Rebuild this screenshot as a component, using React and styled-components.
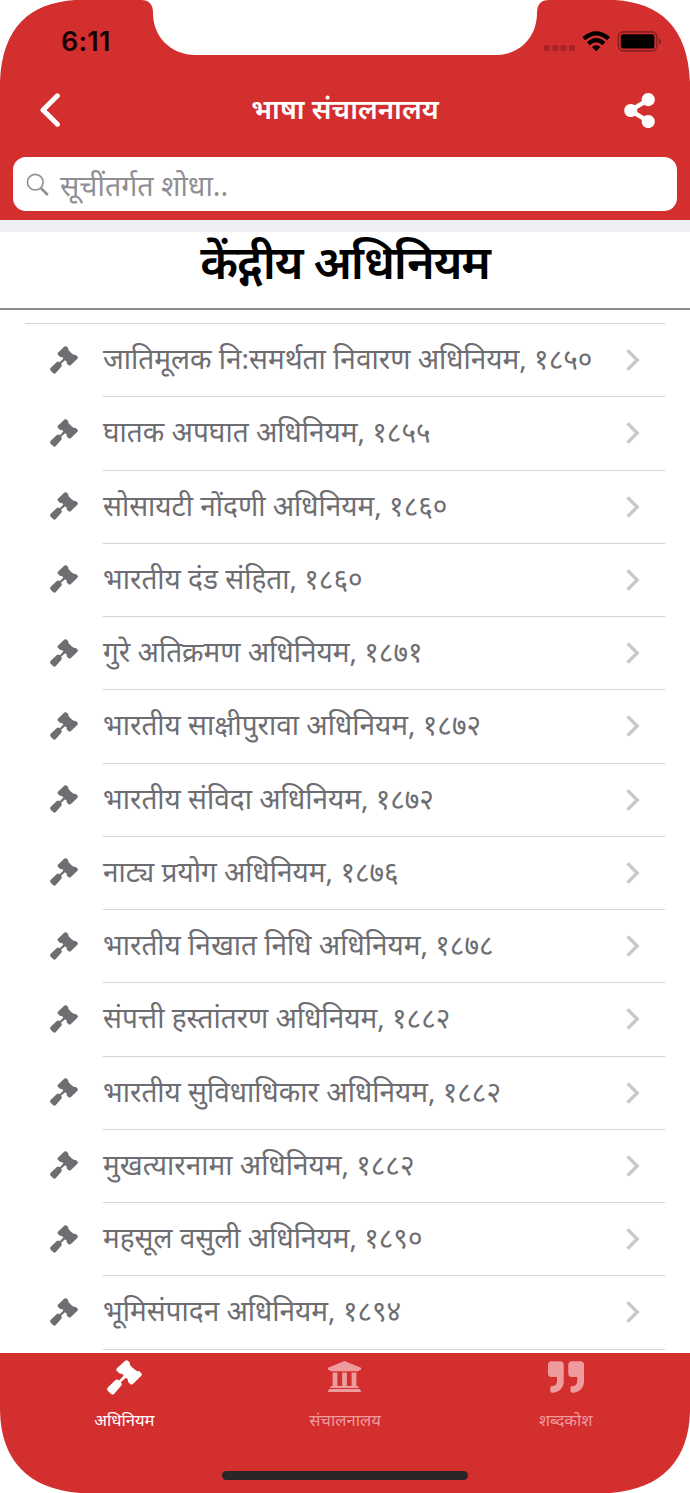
import React from "react";
import styled, { createGlobalStyle } from "styled-components";
import { FaShareAlt, FaQuoteRight } from "react-icons/fa";

const Global = createGlobalStyle`
  * { box-sizing: border-box; }
  body { margin: 0; background: #fff; }
`;

const RED = "#d32f2f";

const Screen = styled.div`
  width: 690px;
  height: 1493px;
  display: flex;
  flex-direction: column;
  overflow: hidden;
  position: relative;
  background: #fff;
  font-family: "Noto Sans", "Noto Sans Devanagari", sans-serif;
`;

const Header = styled.header`
  height: 220px;
  flex: none;
  background: ${RED};
`;

const StatusBar = styled.div`
  height: 82px;
  padding: 0 29px 0 61px;
  display: flex;
  justify-content: space-between;
  align-items: center;
`;

const Time = styled.span`
  padding-top: 2px;
  font: 600 27px/30px Inter, sans-serif;
  color: #180303;
  letter-spacing: 0.2px;
`;

const StatusIcons = styled.svg`
  width: 118px;
  height: 26px;
  display: block;
`;

const NavBar = styled.div`
  height: 56px;
  padding: 0 33px 0 39px;
  display: grid;
  grid-template-columns: 32px 1fr 35px;
  align-items: center;
  color: #fff;
`;

const NavTitle = styled.h1`
  margin: 0;
  padding: 0 3px 4px 0;
  text-align: center;
  font-size: 27.7px;
  line-height: 38px;
  font-weight: 600;
  white-space: nowrap;
`;

const SearchField = styled.div`
  height: 54px;
  margin: 19px 13px 0;
  padding: 2px 13px 0;
  border-radius: 13px;
  background: #fff;
  display: flex;
  align-items: center;
  gap: 11px;
  color: #8e8e93;
  font-size: 28.6px;
  line-height: 40px;
  white-space: nowrap;
`;

const Band = styled.div`
  height: 12px;
  flex: none;
  background: #efeff4;
`;

const Heading = styled.h2`
  height: 78px;
  flex: none;
  margin: 0;
  border-bottom: 2px solid #8c8c8c;
  text-align: center;
  font-size: 47px;
  line-height: 59px;
  letter-spacing: -1.2px;
  font-weight: 600;
  color: #000;
  white-space: nowrap;
`;

const List = styled.ul`
  flex: 1;
  min-height: 0;
  overflow: hidden;
  list-style: none;
  margin: 13px 25px 0;
  padding: 0;
  border-top: 1px solid #d4d4d6;
`;

const Row = styled.li`
  height: 73.25px;
  padding-left: 25px;
  display: flex;
  align-items: center;
  gap: 25px;
  color: #6d6d72;

  > svg {
    margin-bottom: 2px;
  }
`;

const RowBody = styled.div`
  flex: 1;
  height: 100%;
  padding-right: 25px;
  border-bottom: 1px solid #d4d4d6;
  display: flex;
  align-items: center;
  justify-content: space-between;
`;

const RowLabel = styled.span`
  padding-bottom: 4px;
  font-size: 28px;
  font-weight: 380;
  line-height: 40px;
  white-space: nowrap;
`;

const TabBar = styled.nav`
  height: 140px;
  flex: none;
  padding: 0 14px;
  background: ${RED};
  display: grid;
  grid-template-columns: repeat(3, 1fr);
`;

const Tab = styled.div`
  display: flex;
  flex-direction: column;
  align-items: center;
  padding-top: 5px;
  gap: 10px;
  color: ${(p) => (p.$active ? "#fff" : "#ee9b9d")};
  font-size: 16.6px;
  line-height: 28px;
  white-space: nowrap;
`;

const TabIcon = styled.div`
  height: 38px;
  display: flex;
  align-items: center;
`;

const Frame = styled.svg`
  position: absolute;
  inset: 0;
  pointer-events: none;
`;

const HomeIndicator = styled.div`
  position: absolute;
  left: 222px;
  bottom: 13px;
  width: 246px;
  height: 9px;
  border-radius: 5px;
  background: #2a2627;
`;

const Gavel = ({ size }) => (
  <svg width={size} height={size} viewBox="0 0 36 36" fill="currentColor">
    <path d="M18.6 .8 Q20-.4 21.4 .8 L23.2 2.6 Q24.2 3.6 23.4 4.8 Q26.6 8.9 31 11.6 Q32.4 10.8 33.6 11.9 L35.3 13.6 Q36.5 14.9 35.3 16.3 L26.6 24.6 Q25.2 25.8 23.8 24.6 L22 22.8 Q20.9 21.6 21.7 20.4 L19.4 18.2 L14.2 22.8 Q15.9 24.9 14.5 26.6 L7.5 34.6 Q5.8 36.4 3.9 34.8 L.9 31.8 Q-.7 29.9 1 28.1 L8.8 20.6 Q10.6 19.2 12.5 21 L17.2 16 L15.1 13.9 Q13.6 14.6 12.4 13.4 L10.2 11.2 Q9 9.9 10.2 8.6 Z" />
  </svg>
);

const Landmark = () => (
  <svg width="35" height="32" viewBox="0 0 35 32" fill="currentColor">
    <path d="M17.5 0L34 6.8V9.1H32.4Q32.1 10.3 31 10.3H4Q2.9 10.3 2.6 9.1H1V6.8Z" />
    <path d="M5.6 11.5H10.4V25H15.1V11.5H19.9V25H24.6V11.5H29.4V25H30.5Q31.7 25 31.8 27H3.2Q3.3 25 4.5 25H5.6Z" />
    <path d="M2.6 28H32.4Q34 28.3 34 31H1Q1 28.3 2.6 28Z" />
  </svg>
);

const acts = [
  "जातिमूलक नि:समर्थता निवारण अधिनियम, १८५०",
  "घातक अपघात अधिनियम, १८५५",
  "सोसायटी नोंदणी अधिनियम, १८६०",
  "भारतीय दंड संहिता, १८६०",
  "गुरे अतिक्रमण अधिनियम, १८७१",
  "भारतीय साक्षीपुरावा अधिनियम, १८७२",
  "भारतीय संविदा अधिनियम, १८७२",
  "नाट्य प्रयोग अधिनियम, १८७६",
  "भारतीय निखात निधि अधिनियम, १८७८",
  "संपत्ती हस्तांतरण अधिनियम, १८८२",
  "भारतीय सुविधाधिकार अधिनियम, १८८२",
  "मुखत्यारनामा अधिनियम, १८८२",
  "महसूल वसुली अधिनियम, १८९०",
  "भूमिसंपादन अधिनियम, १८९४",
];

export default function App() {
  return (
    <Screen>
      <Global />
      <Header>
        <StatusBar>
          <Time>6:11</Time>
          <StatusIcons viewBox="543 28 118 26">
            <g fill="#a82526">
              <rect x="544" y="45" width="6" height="6" rx="1.5" />
              <rect x="552.3" y="45" width="6" height="6" rx="1.5" />
              <rect x="560.6" y="45" width="6" height="6" rx="1.5" />
              <rect x="569" y="45" width="6" height="6" rx="1.5" />
            </g>
            <g fill="none" stroke="#000" strokeWidth="4.1">
              <path d="M583.8 38.6Q596.2 28 608.6 38.6" />
              <path d="M588.4 43.6Q596.2 36.8 604 43.6" />
            </g>
            <path d="M592 47Q596.2 43.6 600.4 47L596.2 51.2Z" />
            <rect x="618.4" y="31.9" width="38.4" height="19" rx="5" fill="none" stroke="#8c2020" strokeWidth="1.6" />
            <rect x="620.8" y="34.2" width="33.6" height="14.4" rx="2.8" />
            <path d="M658.8 38Q663.4 41.4 658.8 45Z" fill="#8c2020" />
          </StatusIcons>
        </StatusBar>
        <NavBar>
          <svg width="22" height="34" viewBox="0 0 22 34" fill="none" stroke="#fff" strokeWidth="5" strokeLinecap="round" strokeLinejoin="round">
            <path d="M18.4 2.8L4 17L18.4 31.2" />
          </svg>
          <NavTitle>भाषा संचालनालय</NavTitle>
          <FaShareAlt size={35} />
        </NavBar>
        <SearchField>
          <svg width="23" height="24" viewBox="0 0 23 24" fill="none" stroke="currentColor">
            <circle cx="9.3" cy="9.2" r="7.8" strokeWidth="1.6" />
            <path d="M14.8 15L21.8 22" strokeWidth="2.5" />
          </svg>
          <span>सूचींतर्गत शोधा..</span>
        </SearchField>
      </Header>
      <Band />
      <Heading>केंद्गीय अधिनियम</Heading>
      <List>
        {acts.map((a) => (
          <Row key={a}>
            <Gavel size={28} />
            <RowBody>
              <RowLabel>{a}</RowLabel>
              <svg width="14" height="22" viewBox="0 0 14 22" fill="none" stroke="#c7c7cc" strokeWidth="3.4">
                <path d="M1.6 1.4L11.2 11L1.6 20.6" />
              </svg>
            </RowBody>
          </Row>
        ))}
      </List>
      <TabBar>
        <Tab $active>
          <TabIcon><Gavel size={35} /></TabIcon>
          <span>अधिनियम</span>
        </Tab>
        <Tab>
          <TabIcon><Landmark /></TabIcon>
          <span>संचालनालय</span>
        </Tab>
        <Tab>
          <TabIcon><FaQuoteRight size={36} /></TabIcon>
          <span>शब्दकोश</span>
        </Tab>
      </TabBar>
      <HomeIndicator />
      <Frame width="690" height="1493" viewBox="0 0 690 1493" fill="#fff">
        <path d="M0 0H75C30 3 2 27 0 82Z" />
        <path d="M690 0H615C660 3 688 27 690 82Z" />
        <path d="M0 1411C1 1459 27 1489 80 1493H0Z" />
        <path d="M690 1411C689 1459 663 1489 610 1493H690Z" />
        <path d="M141 0C149 0 153 4 153 13C153 36 170 55 196 55H495C521 55 537 36 537 13C537 4 541 0 549 0Z" />
      </Frame>
    </Screen>
  );
}
